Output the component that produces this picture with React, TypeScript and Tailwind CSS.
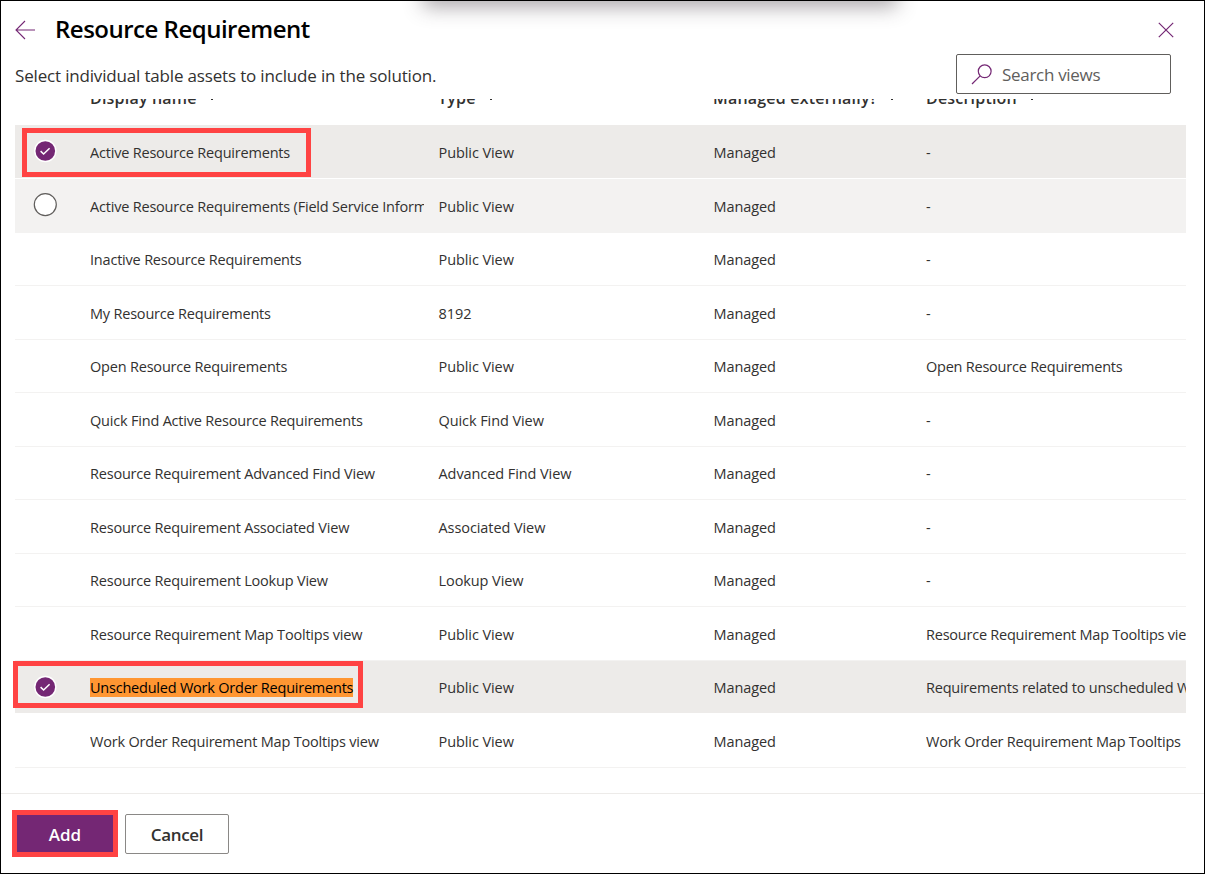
import React from 'react';

type Row = {
  name: string;
  type: string;
  description: string;
  state?: 'selected' | 'hover';
  height: string;
  match?: boolean;
};

const TALL = 'h-[54px]';
const SHORT = 'h-[53px]';

const rows: Row[] = [
  { name: 'Active Resource Requirements', type: 'Public View', description: '-', state: 'selected', height: TALL },
  { name: 'Active Resource Requirements (Field Service Information)', type: 'Public View', description: '-', state: 'hover', height: TALL },
  { name: 'Inactive Resource Requirements', type: 'Public View', description: '-', height: SHORT },
  { name: 'My Resource Requirements', type: '8192', description: '-', height: TALL },
  { name: 'Open Resource Requirements', type: 'Public View', description: 'Open Resource Requirements', height: SHORT },
  { name: 'Quick Find Active Resource Requirements', type: 'Quick Find View', description: '-', height: TALL },
  { name: 'Resource Requirement Advanced Find View', type: 'Advanced Find View', description: '-', height: SHORT },
  { name: 'Resource Requirement Associated View', type: 'Associated View', description: '-', height: TALL },
  { name: 'Resource Requirement Lookup View', type: 'Lookup View', description: '-', height: SHORT },
  { name: 'Resource Requirement Map Tooltips view', type: 'Public View', description: 'Resource Requirement Map Tooltips view', height: TALL },
  { name: 'Unscheduled Work Order Requirements', type: 'Public View', description: 'Requirements related to unscheduled Work Orders', state: 'selected', height: SHORT, match: true },
  { name: 'Work Order Requirement Map Tooltips view', type: 'Public View', description: 'Work Order Requirement Map Tooltips', height: TALL },
];

const columns = 'grid grid-cols-[75px_348px_275px_213px_260px]';

function CheckMark({ state }: { state?: Row['state'] }) {
  if (!state) return <span />;
  return (
    <svg
      className={state === 'selected' ? 'mb-px ml-[18px] size-6' : 'mb-[2px] ml-[18px] size-6'}
      viewBox="0 0 24 24"
      fill="none"
    >
      {state === 'selected' ? (
        <>
          <circle cx="12.3" cy="12" r="11.2" fill="#fff" />
          <circle cx="12.3" cy="12" r="9.8" fill="#742774" />
          <path d="M7.6 12.1l3 2.9 6-5.8" stroke="#fff" strokeWidth="1.5" />
        </>
      ) : (
        <circle cx="12.3" cy="11.6" r="11" fill="#fff" stroke="#605e5c" strokeWidth="1.2" />
      )}
    </svg>
  );
}

function Heading({ label }: { label: string }) {
  return (
    <div className="flex items-center gap-[10px] whitespace-nowrap">
      <span>{label}</span>
      <svg className="size-[10px]" viewBox="0 0 10 10" fill="none" stroke="#323130">
        <path d="M1 3l4 4 4-4" />
      </svg>
    </div>
  );
}

export default function App() {
  return (
    <div className="relative flex h-[874px] w-[1205px] flex-col overflow-hidden border border-black bg-white font-['Open_Sans','Noto_Sans',sans-serif] text-[#323130]">
      <div className="absolute -top-[30px] left-[422px] h-[30px] w-[474px] shadow-[0_6px_20px_rgba(60,50,60,0.42)]" />

      <header className="flex h-[52px] items-center pt-[6px] pr-[29px] pl-[14px]">
        <svg className="size-[20px]" viewBox="0 0 20 20" fill="none" stroke="#742774" strokeWidth="1.1">
          <path d="M10 1L1 10l9 9M1 10h19" />
        </svg>
        <h1 className="-mt-[2px] ml-[20px] flex-1 text-[24px] leading-8 font-semibold tracking-[-0.5px] text-black">
          Resource Requirement
        </h1>
        <svg className="size-[18px]" viewBox="0 0 18 18" fill="none" stroke="#742774" strokeWidth="1.2">
          <path d="M1.8 1.8l14.4 14.4M16.2 1.8L1.8 16.2" />
        </svg>
      </header>

      <div className="flex h-[46px] shrink-0 justify-between pr-[33px] pl-[14px]">
        <p className="pt-[11px] text-[17px] leading-6 tracking-[-0.17px]">
          Select individual table assets to include in the solution.
        </p>
        <div className="mt-px flex h-[40px] w-[215px] items-center rounded-[2px] border border-[#605e5c] bg-white pl-[14px] text-[17px] tracking-[-0.3px] text-[#605e5c]">
          <svg className="mr-[10px] size-[21px]" viewBox="0 0 21 21" fill="none" stroke="#742774" strokeWidth="1.2">
            <circle cx="13.7" cy="7.3" r="6.4" />
            <path d="M9.2 11.8L1 20" />
          </svg>
          <span className="pt-px">Search views</span>
        </div>
      </div>

      <main className="mx-[14px] h-[694px] w-[1171px] shrink-0 overflow-hidden">
        <div className={`${columns} -mt-[12px] h-[38px] items-start text-[16px] leading-[22px] font-semibold tracking-[0.2px]`}>
          <span />
          <Heading label="Display name" />
          <Heading label="Type" />
          <Heading label="Managed externally?" />
          <Heading label="Description" />
        </div>
        {rows.map((row) => (
          <div
            key={row.name}
            className={`${columns} ${row.height} items-center overflow-hidden border-b border-[#f3f2f1] text-[14.5px] leading-5 tracking-[-0.2px] whitespace-nowrap ${
              row.state === 'selected' ? 'border-b-white bg-[#edebe9]' : row.state === 'hover' ? 'bg-[#f3f2f1]' : ''
            }`}
          >
            <CheckMark state={row.state} />
            <div className="mr-[14px] overflow-hidden pt-[2px]">
              <span className={row.match ? 'bg-[#ff9632] tracking-[-0.22px] text-black' : ''}>{row.name}</span>
            </div>
            <div className="pt-[2px] pl-[0.5px] tracking-[-0.08px]">{row.type}</div>
            <div className="pt-[2px] pl-[0.5px] tracking-[-0.08px]">Managed</div>
            <div className="overflow-hidden pt-[2px] tracking-[-0.23px]">{row.description}</div>
          </div>
        ))}
      </main>

      <footer className="flex h-[80px] shrink-0 items-start gap-[7px] border-t border-[#edebe9] pt-[16px] pl-[11px] text-[17px]">
        <button className="h-[47px] w-[106px] border-[5px] border-[#ff4343] bg-[#742774] pt-[2px] font-semibold text-white">
          Add
        </button>
        <button className="mt-[4px] h-[40px] w-[104px] rounded-[2px] border border-[#8a8886] pt-px font-semibold tracking-[-0.35px]">
          Cancel
        </button>
      </footer>

      <div className="absolute top-[127px] left-[21px] h-[49px] w-[289px] border-[5px] border-[#ff4343]" />
      <div className="absolute top-[660px] left-[12px] h-[47px] w-[350px] border-[5px] border-[#ff4343]" />
    </div>
  );
}
